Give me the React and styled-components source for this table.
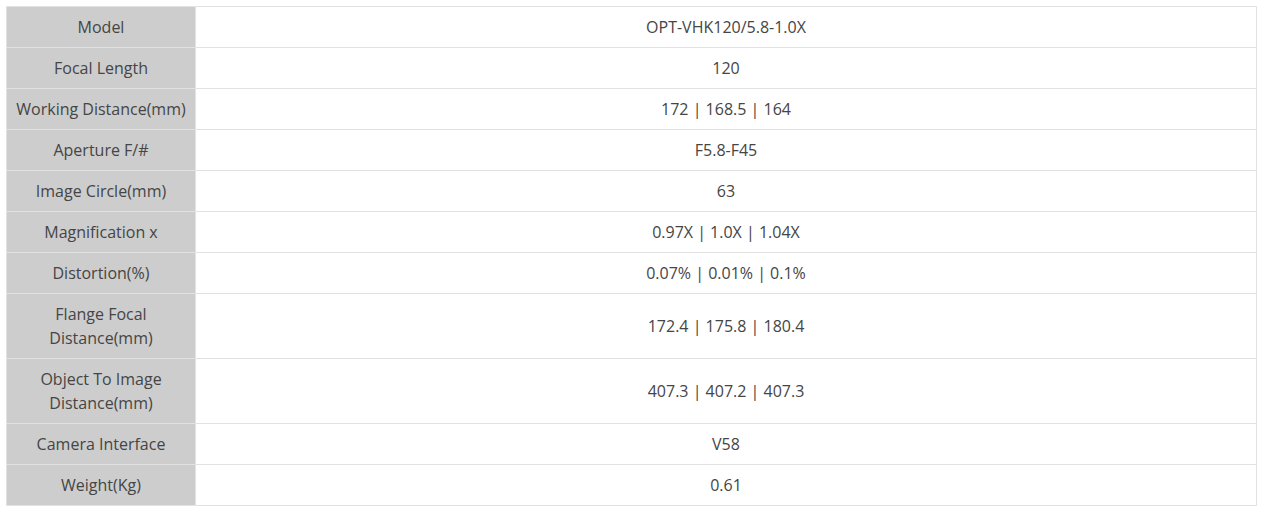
import React from 'react';
import styled, { createGlobalStyle } from 'styled-components';

const GlobalStyle = createGlobalStyle`
  body {
    margin: 0;
    padding: 6px;
    background: #fff;
    font-family: "Open Sans", "Noto Sans", Arial, sans-serif;
  }
`;

const Table = styled.table`
  width: 1251px;
  border-collapse: collapse;
  border: 1px solid #e2e2e2;
  font-size: 16px;
  color: #454545;
`;

const Row = styled.tr`
  border-bottom: 1px solid #e2e2e2;
`;

const Label = styled.th`
  width: 180px;
  background-color: #cdcdcd;
  font-weight: normal;
  text-align: center;
  padding: 8px 4px;
  line-height: 24px;
  border-right: 1px solid #e2e2e2;
`;

const Value = styled.td`
  text-align: center;
  padding: 8px 4px;
  line-height: 24px;
`;

const specs = [
  ['Model', 'OPT-VHK120/5.8-1.0X'],
  ['Focal Length', '120'],
  ['Working Distance(mm)', '172 | 168.5 | 164'],
  ['Aperture F/#', 'F5.8-F45'],
  ['Image Circle(mm)', '63'],
  ['Magnification x', '0.97X | 1.0X | 1.04X'],
  ['Distortion(%)', '0.07% | 0.01% | 0.1%'],
  [['Flange Focal', 'Distance(mm)'], '172.4 | 175.8 | 180.4'],
  [['Object To Image', 'Distance(mm)'], '407.3 | 407.2 | 407.3'],
  ['Camera Interface', 'V58'],
  ['Weight(Kg)', '0.61'],
];

export default function App() {
  return (
    <>
      <GlobalStyle />
      <Table>
        <tbody>
          {specs.map(([label, value], i) => (
            <Row key={i}>
              <Label>
                {Array.isArray(label) ? (
                  <>
                    {label[0]}
                    <br />
                    {label[1]}
                  </>
                ) : (
                  label
                )}
              </Label>
              <Value>{value}</Value>
            </Row>
          ))}
        </tbody>
      </Table>
    </>
  );
}
